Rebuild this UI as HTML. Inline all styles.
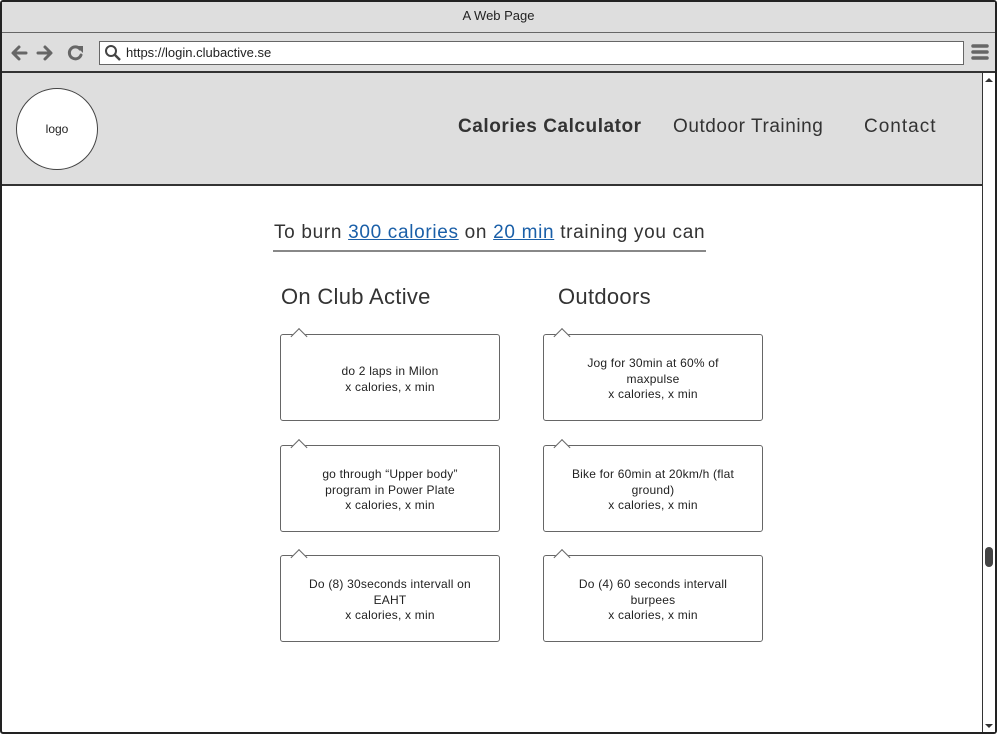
<!DOCTYPE html>
<html><head><style>
*{margin:0;padding:0;box-sizing:border-box}
body{width:997px;height:734px;background:#fff;font-family:"Liberation Sans",sans-serif;color:#333;position:relative;overflow:hidden}
.abs{position:absolute}
.win{left:0;top:0;width:997px;height:734px;border:2px solid #222;border-radius:3px}
.title{left:2px;top:2px;width:993px;height:31px;background:#dedede;border-bottom:1px solid #666;text-align:center;font-size:13px;line-height:27px;color:#222}
.tool{left:2px;top:33px;width:993px;height:40px;background:#dedede;border-bottom:2px solid #333}
.url{left:99px;top:41px;width:865px;height:24px;background:#fff;border:1px solid #666;font-size:13px;line-height:22px;padding-left:26px;color:#222}
.hdr{left:2px;top:73px;width:980px;height:113px;background:#dedede;border-bottom:2px solid #333}
.logo{left:16px;top:88px;width:82px;height:82px;border-radius:50%;background:#fff;border:1px solid #444;text-align:center;line-height:80px;font-size:12px;color:#222}
.nav{top:116px;font-size:19px;color:#333;letter-spacing:0.55px}
.sb{left:982px;top:73px;width:13px;height:659px;border-left:1px solid #333;background:#fff}
.bub{width:220px;height:87px;border:1px solid #666;border-radius:3px;background:#fff;display:flex;align-items:center;justify-content:center;text-align:center;font-size:12px;line-height:15.5px;color:#222;white-space:nowrap;letter-spacing:0.2px;padding-top:4px}
.tail{position:absolute;left:10px;top:-8px;width:0;height:0}
.tail:before{content:"";position:absolute;width:11px;height:11px;background:#fff;border-left:1px solid #666;border-top:1px solid #666;transform:rotate(45deg);transform-origin:0 0;left:8px;top:1px}
a{color:#1a5fa8;text-decoration:underline}
h2{position:absolute;font-weight:normal;font-size:22px;color:#333;letter-spacing:0.3px}
</style></head><body>
<div class="abs win"></div>
<div class="abs title">A Web Page</div>
<div class="abs tool">
<svg class="abs" style="left:8px;top:10px" width="80" height="20" viewBox="0 0 80 20">
<g fill="none" stroke="#666" stroke-width="3" stroke-linecap="round" stroke-linejoin="round">
<path d="M16 10H4M9 4L3 10l6 6"/><path d="M28 10h12M35 4l6 6-6 6"/>
<path d="M70 6a6 6 0 1 0 1 6"/></g>
<path d="M66 3l7 0 0 7z" fill="#666"/>
</svg>
<svg class="abs" style="left:968px;top:10px" width="20" height="18"><g stroke="#666" stroke-width="3.5" stroke-linecap="round"><path d="M3 3h14M3 9h14M3 15h14"/></g></svg>
</div>
<div class="abs url">https://login.clubactive.se</div>
<svg class="abs" style="left:104px;top:44px" width="18" height="18"><circle cx="7" cy="7" r="5" fill="none" stroke="#444" stroke-width="2"/><path d="M11 11l5 5" stroke="#444" stroke-width="2.5"/></svg>
<div class="abs hdr"></div>
<div class="abs logo">logo</div>
<div class="abs nav" style="left:458px;font-weight:bold">Calories Calculator</div>
<div class="abs nav" style="left:673px">Outdoor Training</div>
<div class="abs nav" style="left:864px;letter-spacing:1px">Contact</div>
<div class="abs sb"></div>
<svg class="abs" style="left:984px;top:76px" width="10" height="8"><path d="M1 6l4-4 4 4z" fill="#333"/></svg>
<svg class="abs" style="left:984px;top:722px" width="10" height="8"><path d="M1 2l4 4 4-4z" fill="#333"/></svg>
<div class="abs" style="left:985px;top:547px;width:8px;height:20px;background:#444;border-radius:4px"></div>

<div class="abs" style="left:274px;top:222px;font-size:19px;color:#333;letter-spacing:0.68px">To burn <a>300 calories</a> on <a>20 min</a> training you can</div>
<div class="abs" style="left:273px;top:250px;width:433px;height:2px;background:#888"></div>
<h2 style="left:281px;top:284px">On Club Active</h2>
<h2 style="left:558px;top:284px">Outdoors</h2>

<div class="abs bub" style="left:280px;top:334px"><span class="tail"></span><div>do 2 laps in Milon<br>x calories, x min</div></div>
<div class="abs bub" style="left:280px;top:445px"><span class="tail"></span><div>go through “Upper body”<br>program in Power Plate<br>x calories, x min</div></div>
<div class="abs bub" style="left:280px;top:555px"><span class="tail"></span><div>Do (8) 30seconds intervall on<br>EAHT<br>x calories, x min</div></div>
<div class="abs bub" style="left:543px;top:334px"><span class="tail"></span><div>Jog for 30min at 60% of<br>maxpulse<br>x calories, x min</div></div>
<div class="abs bub" style="left:543px;top:445px"><span class="tail"></span><div>Bike for 60min at 20km/h (flat<br>ground)<br>x calories, x min</div></div>
<div class="abs bub" style="left:543px;top:555px"><span class="tail"></span><div>Do (4) 60 seconds intervall<br>burpees<br>x calories, x min</div></div>
</body></html>
